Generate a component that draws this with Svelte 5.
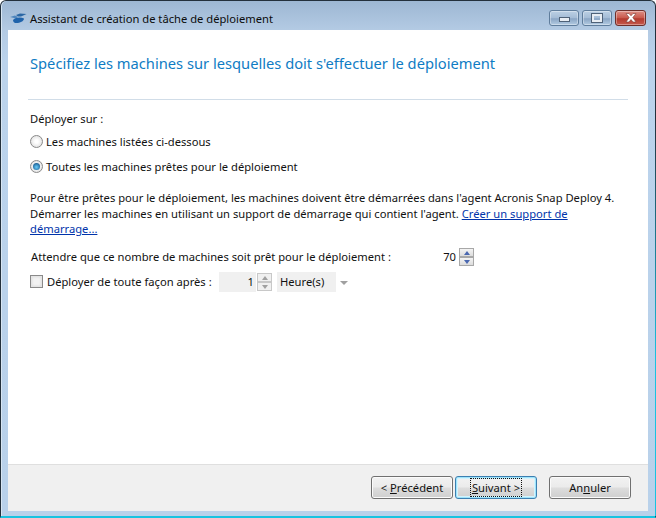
<script>
  const title = 'Assistant de création de tâche de déploiement';
</script>

<div class="window">
  <div class="titlebar">
    <svg class="appicon" width="17" height="11" viewBox="0 0 17 11">
      <path d="M0 4 L5 2.500 L8 4 L6 5.500 Z" fill="#4f86bd" />
      <path d="M6 2 L10 0.500 L16.500 1 L11 3.500 L8 3.500 Z" fill="#2a66a4" />
      <path d="M3 7 C6 4 11 4 14 5.500 C14 8.500 9 10.500 5 10 C4 9.500 3 8.500 3 7 Z" fill="#1f63ab" />
    </svg>
    <span class="title">{title}</span>
    <div class="controls">
      <div class="ctl"><span class="min"></span></div>
      <div class="ctl"><span class="max"></span></div>
      <div class="ctl close">
        <svg width="18" height="12" viewBox="0 0 18 12"><path d="M4 1.500 L7 1.500 L9 3.800 L11 1.500 L14 1.500 L10.800 5.600 L14 10 L11 10 L9 7.500 L7 10 L4 10 L7.200 5.600 Z" fill="#fff" stroke="#7a3a34" stroke-width="0.6" /></svg>
      </div>
    </div>
  </div>

  <div class="client">
    <div class="content">
      <h1>Spécifiez les machines sur lesquelles doit s'effectuer le déploiement</h1>
      <hr />
      <p class="label">Déployer sur :</p>
      <label class="radio first"><span class="dot"></span>Les machines listées ci-dessous</label>
      <label class="radio"><span class="dot on"></span>Toutes les machines prêtes pour le déploiement</label>
      <p class="info">
        Pour être prêtes pour le déploiement, les machines doivent être démarrées dans l'agent Acronis Snap Deploy 4.<br />
        Démarrer les machines en utilisant un support de démarrage qui contient l'agent. <a href="#top">Créer un support de démarrage...</a>
      </p>
      <div class="waitrow">
        <span class="waitlabel">Attendre que ce nombre de machines soit prêt pour le déploiement :</span>
        <span class="num">70</span>
        <div class="spin">
          <span class="up"></span>
          <span class="down"></span>
        </div>
      </div>
      <div class="afterrow">
        <span class="check"></span>
        <span class="afterlabel">Déployer de toute façon après :</span>
        <span class="field">1</span>
        <div class="spin off">
          <span class="up"></span>
          <span class="down"></span>
        </div>
        <span class="unit">Heure(s)</span>
        <span class="caret"></span>
      </div>
    </div>

    <div class="footer">
      <button class="btn">&lt; <u>P</u>récédent</button>
      <button class="btn default"><span class="focus"><u>S</u>uivant &gt;</span></button>
      <button class="btn cancel">An<u>n</u>uler</button>
    </div>
  </div>
</div>

<style>
  :global(body) {
    margin: 0;
    background: #fff;
  }

  .window {
    position: relative;
    width: 656px;
    height: 518px;
    box-sizing: border-box;
    display: flex;
    flex-direction: column;
    padding: 0 7px 5px;
    border: 1px solid #23303c;
    border-bottom: 2px solid #19c3e0;
    border-radius: 6px 6px 0 0;
    background: linear-gradient(180deg, #9db7d3 0, #b4cbe4 30px, #bbd3ec 60px, #b9d1ea 100%);
    font-family: "Noto Sans", "Open Sans", sans-serif;
    font-size: 11.2px;
    color: #111;
    box-shadow: inset 1px 0 0 #d8e6f3;
  }

  /* cyan glow creeping up the right edge */
  .window::after {
    content: "";
    position: absolute;
    right: -1px;
    top: 120px;
    bottom: 0;
    width: 1px;
    background: linear-gradient(180deg, #23303c, #19c3e0 60%);
  }

  .titlebar {
    flex: 0 0 29px;
    display: flex;
    align-items: center;
    position: relative;
  }

  .appicon {
    margin: 5px 3px 0 2px;
  }

  .title {
    color: #0c0c0c;
    margin-top: 5px;
  }

  .controls {
    margin-left: auto;
    display: flex;
    align-self: flex-start;
    margin-top: 9px;
    margin-right: 2px;
    gap: 3px;
  }

  .ctl {
    width: 28px;
    height: 14px;
    border: 1px solid #5f7d9c;
    border-radius: 3px;
    background: linear-gradient(180deg, #bcd0e4 0, #a4bcd6 50%, #8aa5c4 55%, #b3cbe2 100%);
    box-shadow: inset 0 0 0 1px rgba(255, 255, 255, 0.35);
    display: flex;
    align-items: center;
    justify-content: center;
  }

  .close {
    width: 29px;
    border-color: #6e2f2a;
    background: linear-gradient(180deg, #dd8f85 0, #c9594c 50%, #b33a2e 55%, #c65a4d 100%);
  }

  .min {
    display: block;
    width: 9px;
    height: 3px;
    margin-top: 3px;
    background: #e8edf3;
    border: 1px solid #4f6278;
  }

  .max {
    display: block;
    width: 6px;
    height: 4px;
    border: 2px solid #e8edf3;
    outline: 1px solid #4f6278;
  }

  .client {
    flex: 1;
    display: flex;
    flex-direction: column;
    background: #fff;
    min-height: 0;
  }

  .content {
    flex: 1;
    padding: 0 20px 0 22px;
    min-height: 0;
  }

  h1 {
    margin: 22px 0 0;
    font-size: 14.7px;
    font-weight: 400;
    line-height: 22px;
    color: #0f7cc4;
  }

  hr {
    border: 0;
    height: 1px;
    background: #d1dde8;
    margin: 25px 0 0 -2px;
  }

  .label {
    margin: 10px 0 0;
    line-height: 18px;
  }

  .radio {
    display: flex;
    align-items: center;
    height: 18px;
    margin-top: 7px;
    gap: 3px;
  }

  .radio.first {
    margin-top: 4px;
  }

  .dot {
    width: 11px;
    height: 11px;
    border-radius: 50%;
    border: 1px solid #8a8a8a;
    background: radial-gradient(circle at 50% 50%, #fff 20%, #dcdcdc 90%);
    position: relative;
    flex: none;
  }

  .dot.on::after {
    content: "";
    position: absolute;
    inset: 2px;
    border-radius: 50%;
    background: radial-gradient(circle at 50% 60%, #5fc0ee 10%, #0f4f86 85%);
  }

  .info {
    margin: 15px 0 0;
    line-height: 15.5px;
  }

  a {
    color: #0033aa;
    text-decoration: underline;
  }

  .waitrow {
    display: flex;
    align-items: center;
    height: 20px;
    margin-top: 10px;
  }

  .waitlabel {
    flex: 0 0 412px;
    padding-left: 1px;
    box-sizing: border-box;
  }

  .num {
    width: 14px;
    text-align: right;
    margin-right: 3px;
    flex: none;
  }

  .spin {
    display: flex;
    flex-direction: column;
    width: 15px;
    height: 18px;
    flex: none;
  }

  .spin span {
    flex: 1;
    border: 1px solid #a8a8a8;
    background: linear-gradient(180deg, #f4f4f4, #dcdcdc);
    position: relative;
  }

  .spin span::after {
    content: "";
    position: absolute;
    left: 3.500px;
    top: 2px;
    border-left: 3px solid transparent;
    border-right: 3px solid transparent;
  }

  .spin .up::after {
    border-bottom: 4px solid #4a68b0;
  }

  .spin .down::after {
    border-top: 4px solid #4a68b0;
  }

  .spin.off {
    margin-left: 1px;
  }

  .spin.off span {
    border-color: #c8c8c8;
    background: #f0f0f0;
  }

  .spin.off .up::after {
    border-bottom-color: #a0a0a0;
  }

  .spin.off .down::after {
    border-top-color: #a0a0a0;
  }

  .afterrow {
    display: flex;
    align-items: center;
    height: 20px;
    margin-top: 5px;
  }

  .check {
    width: 11px;
    height: 11px;
    border: 1px solid #8a8a8a;
    box-shadow: inset 0 0 0 1px #e4e4e4, inset 0 0 3px #bbb;
    background: #f2f2f2;
    flex: none;
  }

  .afterlabel {
    margin-left: 4px;
    width: 172px;
    flex: none;
  }

  .field {
    width: 37px;
    height: 20px;
    line-height: 20px;
    box-sizing: border-box;
    background: #f0f0f0;
    text-align: right;
    flex: none;
    padding-right: 2px;
  }

  .unit {
    width: 59px;
    height: 20px;
    line-height: 20px;
    background: #f0f0f0;
    margin-left: 5px;
    padding-left: 3px;
    box-sizing: border-box;
    flex: none;
  }

  .caret {
    margin-left: 4px;
    margin-top: 2px;
    border-left: 4px solid transparent;
    border-right: 4px solid transparent;
    border-top: 4px solid #a0a0a0;
  }

  .footer {
    flex: 0 0 47px;
    box-sizing: border-box;
    border-top: 1px solid #dfdfdf;
    background: #f0f0f0;
    display: flex;
    align-items: flex-start;
    padding: 11px 17px 0 0;
    justify-content: flex-end;
  }

  .btn {
    width: 82px;
    height: 23px;
    padding: 0;
    font: inherit;
    color: #111;
    border: 1px solid #707070;
    border-radius: 3px;
    background: linear-gradient(180deg, #f2f2f2 0, #ebebeb 48%, #dddddd 52%, #cfcfcf 100%);
    box-shadow: inset 0 0 0 1px #fbfbfb;
    margin-left: 2px;
  }

  .default {
    border-color: #3c7fb1;
    box-shadow: inset 0 0 0 1px #9fe4fb, inset 0 0 0 2px #d4f3fd;
  }

  .focus {
    outline: 1px dotted #111;
    padding: 1px 1px;
  }

  .cancel {
    margin-left: 12px;
  }
</style>
